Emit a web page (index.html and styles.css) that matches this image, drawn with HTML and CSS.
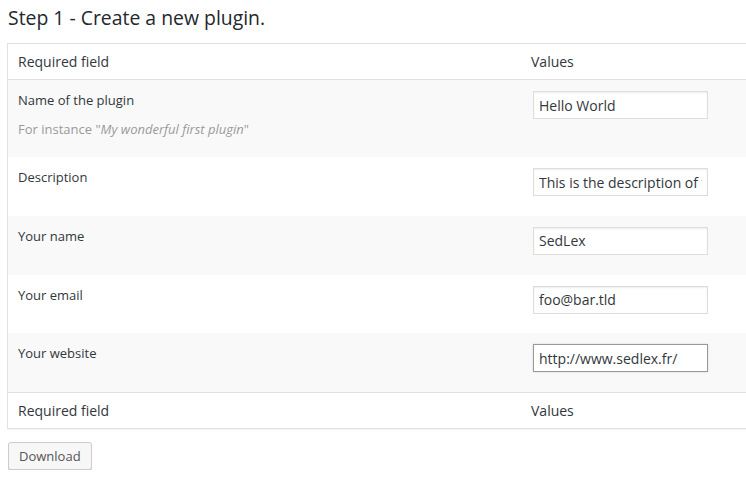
FILE: index.html
```html
<!DOCTYPE html>
<html>
<head>
<meta charset="utf-8">
<link rel="stylesheet" href="styles.css">
</head>
<body>
<div class="page">
  <h2 class="title">Step 1 - Create a new plugin.</h2>
  <table class="form-table">
    <thead>
      <tr><th class="col-label">Required field</th><th class="col-value">Values</th></tr>
    </thead>
    <tbody>
      <tr class="alt">
        <td class="cell-label">
          <div class="label">Name of the plugin</div>
          <div class="hint">For instance "<em>My wonderful first plugin</em>"</div>
        </td>
        <td class="cell-value"><input class="field" type="text" value="Hello World"></td>
      </tr>
      <tr>
        <td class="cell-label"><div class="label">Description</div></td>
        <td class="cell-value"><input class="field" type="text" value="This is the description of the plugin"></td>
      </tr>
      <tr class="alt">
        <td class="cell-label"><div class="label">Your name</div></td>
        <td class="cell-value"><input class="field" type="text" value="SedLex"></td>
      </tr>
      <tr>
        <td class="cell-label"><div class="label">Your email</div></td>
        <td class="cell-value"><input class="field" type="text" value="foo@bar.tld"></td>
      </tr>
      <tr class="alt">
        <td class="cell-label"><div class="label">Your website</div></td>
        <td class="cell-value"><input class="field field-focus" type="text" value="http://www.sedlex.fr/"></td>
      </tr>
    </tbody>
    <tfoot>
      <tr><th class="col-label">Required field</th><th class="col-value">Values</th></tr>
    </tfoot>
  </table>
  <button class="btn" type="button">Download</button>
</div>
</body>
</html>
```

FILE: styles.css
```css
html, body {
  margin: 0;
  padding: 0;
  background: #fff;
  overflow: hidden;
}
body {
  font-family: "Open Sans", "Liberation Sans", sans-serif;
  color: #333;
  font-size: 13px;
}
.page {
  padding: 0 0 0 7px;
  width: 820px;
}
.title {
  margin: 0;
  padding: 5px 0 0 1px;
  font-size: 19.4px;
  font-weight: 400;
  line-height: 26px;
  color: #23282d;
  height: 38px;
}
.form-table {
  width: 820px;
  border-collapse: collapse;
  border: 1px solid #e1e1e1;
  box-shadow: 0 1px 1px rgba(0,0,0,.04);
  margin: 0 0 13px 0;
}
.form-table th {
  text-align: left;
  font-weight: 400;
  font-size: 14px;
  line-height: 19px;
  padding: 8px 10px;
  color: #32373c;
}
.form-table thead th { border-bottom: 1px solid #e1e1e1; }
.form-table tfoot th { border-top: 1px solid #e1e1e1; }
.col-label { width: 493px; }
.form-table td {
  vertical-align: top;
  font-size: 13px;
}
.alt td { background: #f9f9f9; }
.cell-label {
  padding: 10px 10px 18px;
}
.cell-value {
  padding: 11px 10px 19.75px 12px;
}
.label {
  line-height: 20px;
  color: #32373c;
}
.hint {
  margin-top: 9px;
  line-height: 20px;
  color: #999;
}
.hint em { font-style: italic; }
.field {
  display: block;
  box-sizing: border-box;
  width: 175px;
  height: 28px;
  margin: 0;
  padding: 3px 5px;
  border: 1px solid #ddd;
  box-shadow: inset 0 1px 2px rgba(0,0,0,.07);
  background: #fff;
  font-family: "Open Sans", "Liberation Sans", sans-serif;
  font-size: 14px;
  color: #32373c;
  outline: none;
  border-radius: 0;
}
.field-focus {
  border-color: #999;
  box-shadow: 0 0 2px rgba(0,0,0,.15);
}
.btn {
  display: block;
  margin-left: 1px;
  height: 28px;
  padding: 0 10px 1px;
  font-family: "Open Sans", "Liberation Sans", sans-serif;
  font-size: 13px;
  line-height: 26px;
  color: #555;
  background: #f7f7f7;
  border: 1px solid #ccc;
  border-radius: 3px;
  box-shadow: 0 1px 0 #ccc;
}
```
